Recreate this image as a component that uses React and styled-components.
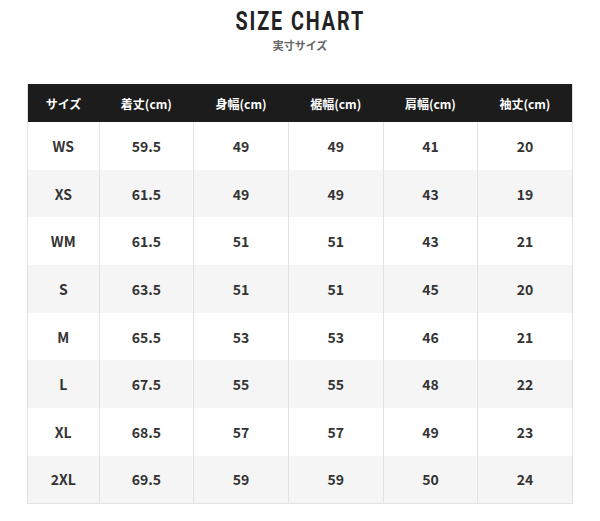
import styled, { createGlobalStyle } from "styled-components";

const GlobalStyle = createGlobalStyle`
  body {
    margin: 0;
    background: #ffffff;
    font-family: "Noto Sans CJK JP", "Noto Sans", sans-serif;
  }
`;

const headers = ["サイズ", "着丈(cm)", "身幅(cm)", "裾幅(cm)", "肩幅(cm)", "袖丈(cm)"];

const rows = [
  ["WS", "59.5", "49", "49", "41", "20"],
  ["XS", "61.5", "49", "49", "43", "19"],
  ["WM", "61.5", "51", "51", "43", "21"],
  ["S", "63.5", "51", "51", "45", "20"],
  ["M", "65.5", "53", "53", "46", "21"],
  ["L", "67.5", "55", "55", "48", "22"],
  ["XL", "68.5", "57", "57", "49", "23"],
  ["2XL", "69.5", "59", "59", "50", "24"],
];

export default function App() {
  return (
    <Page>
      <GlobalStyle />
      <Heading>
        <Title>SIZE CHART</Title>
        <Subtitle>実寸サイズ</Subtitle>
      </Heading>

      <Table>
        <colgroup>
          <col style={{ width: "71.5px" }} />
          {headers.slice(1).map((h) => (
            <col key={h} />
          ))}
        </colgroup>
        <thead>
          <tr>
            {headers.map((h) => (
              <HeadCell key={h}>{h}</HeadCell>
            ))}
          </tr>
        </thead>
        <tbody>
          {rows.map((row, i) => (
            <Row key={row[0]} $striped={i % 2 === 1}>
              {row.map((value, j) => (
                <Cell key={j}>{value}</Cell>
              ))}
            </Row>
          ))}
        </tbody>
      </Table>
    </Page>
  );
}

const Page = styled.div`
  width: 600px;
  height: 521px;
  padding-top: 6px;
  box-sizing: border-box;
`;

const Heading = styled.div`
  display: flex;
  flex-direction: column;
  align-items: center;
  height: 78px;
`;

const Title = styled.h1`
  margin: 0;
  display: inline-block;
  font-family: Roboto, "Liberation Sans", sans-serif;
  font-weight: 700;
  font-size: 26px;
  line-height: 30px;
  letter-spacing: 2.5px;
  color: #222222;
  transform: scaleX(0.76);
`;

const Subtitle = styled.div`
  margin-top: 2px;
  font-size: 11px;
  line-height: 14px;
  font-weight: 700;
  color: #666666;
`;

const Table = styled.table`
  width: 546px;
  margin: 0 auto;
  border-collapse: collapse;
  table-layout: fixed;
  border: 1px solid #e2e2e2;
  border-top: none;
`;

const HeadCell = styled.th`
  height: 38px;
  padding: 0;
  background: #1c1c1c;
  color: #ffffff;
  font-size: 12px;
  font-weight: 700;
  text-align: center;
  vertical-align: middle;
`;

const Row = styled.tr`
  height: 47.7px;
  background: ${(p) => (p.$striped ? "#f5f5f5" : "#ffffff")};
`;

const Cell = styled.td`
  padding: 0;
  border-left: 1px solid #e2e2e2;
  border-right: 1px solid #e2e2e2;
  color: #333333;
  font-size: 14px;
  font-weight: 700;
  text-align: center;
  vertical-align: middle;
`;
